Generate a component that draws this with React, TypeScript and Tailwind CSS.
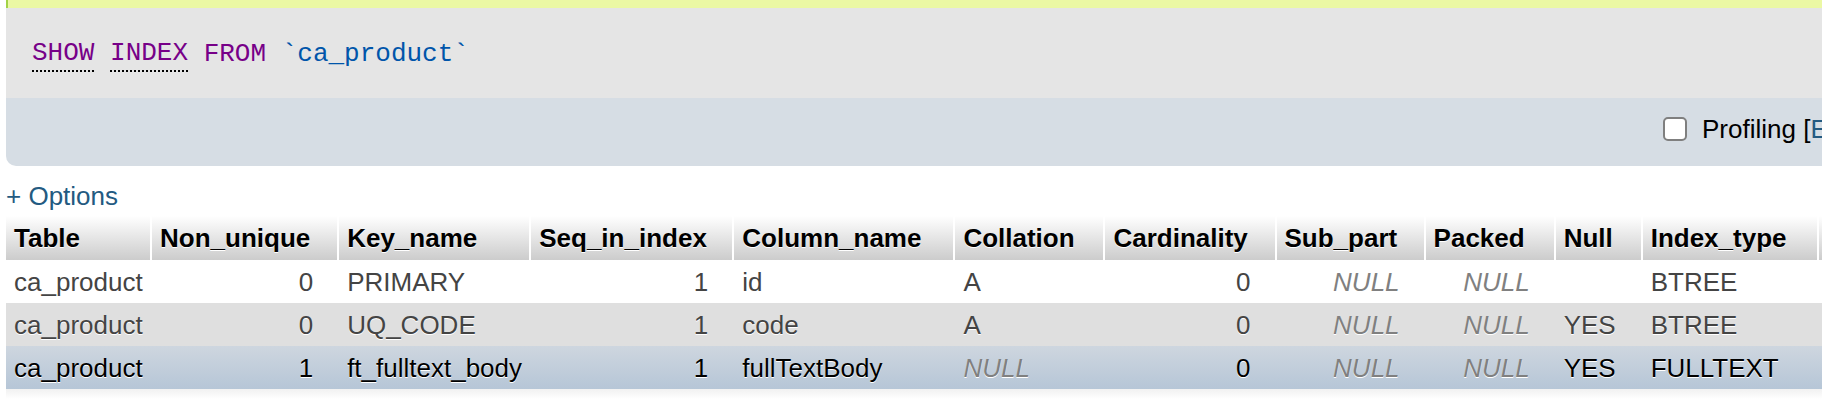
import React from "react";

type Cell = { v: string; align?: "r" | "l"; nul?: boolean };

const cols: { name: string; w: string }[] = [
  { name: "Table", w: "w-[146px]" },
  { name: "Non_unique", w: "w-[187px]" },
  { name: "Key_name", w: "w-[192px]" },
  { name: "Seq_in_index", w: "w-[203px]" },
  { name: "Column_name", w: "w-[221px]" },
  { name: "Collation", w: "w-[150px]" },
  { name: "Cardinality", w: "w-[171px]" },
  { name: "Sub_part", w: "w-[149px]" },
  { name: "Packed", w: "w-[130px]" },
  { name: "Null", w: "w-[87px]" },
  { name: "Index_type", w: "w-[176px]" },
  { name: "Comment", w: "w-[160px]" },
  { name: "Index_comment", w: "w-[220px]" },
];

const rows: Cell[][] = [
  [
    { v: "ca_product" },
    { v: "0", align: "r" },
    { v: "PRIMARY" },
    { v: "1", align: "r" },
    { v: "id" },
    { v: "A" },
    { v: "0", align: "r" },
    { v: "NULL", align: "r", nul: true },
    { v: "NULL", align: "r", nul: true },
    { v: "" },
    { v: "BTREE" },
    { v: "" },
    { v: "" },
  ],
  [
    { v: "ca_product" },
    { v: "0", align: "r" },
    { v: "UQ_CODE" },
    { v: "1", align: "r" },
    { v: "code" },
    { v: "A" },
    { v: "0", align: "r" },
    { v: "NULL", align: "r", nul: true },
    { v: "NULL", align: "r", nul: true },
    { v: "YES" },
    { v: "BTREE" },
    { v: "" },
    { v: "" },
  ],
  [
    { v: "ca_product" },
    { v: "1", align: "r" },
    { v: "ft_fulltext_body" },
    { v: "1", align: "r" },
    { v: "fullTextBody" },
    { v: "NULL", nul: true },
    { v: "0", align: "r" },
    { v: "NULL", align: "r", nul: true },
    { v: "NULL", align: "r", nul: true },
    { v: "YES" },
    { v: "FULLTEXT" },
    { v: "" },
    { v: "" },
  ],
];

const rowBg = [
  "bg-white text-[#444444]",
  "bg-[#dfdfdf] text-[#444444]",
  "bg-linear-to-b from-[#ced6df] to-[#b6c6d7] text-black",
];

export default function App() {
  return (
    <div className="w-[1822px] h-[400px] overflow-hidden bg-white font-['Liberation_Sans',Arial,sans-serif] text-[26px] leading-[30px]">
      <div className="ml-[6px] h-[8px] w-[2200px] bg-[#ebf8a4] border-l-2 border-[#a2d246]" />

      <div className="ml-[6px] w-[2200px] rounded-bl-[10px] overflow-hidden">
        <div className="h-[90px] bg-[#e5e5e5] pl-[26px] pt-[2px] flex items-center font-['Liberation_Mono','Courier_New',monospace] text-[26px] whitespace-pre">
          <span className="text-[#770088] border-b-2 border-dotted border-black leading-[34px]">SHOW</span>
          <span> </span>
          <span className="text-[#770088] border-b-2 border-dotted border-black leading-[34px]">INDEX</span>
          <span className="text-[#770088]"> FROM </span>
          <span className="text-[#0055aa]">`ca_product`</span>
        </div>
        <div className="h-[68px] bg-[#d6dde4] flex items-center pb-[6px]">
          <div className="ml-[1657px] flex items-center whitespace-nowrap">
            <span className="w-[24px] h-[24px] rounded-[5px] border-2 border-[#7f7f7f] bg-white" />
            <span className="ml-[15px] text-black">
              Profiling [<a className="text-[#235a81]">Edit inline</a>] [ <a className="text-[#235a81]">Edit</a> ] [ <a className="text-[#235a81]">Explain SQL</a> ]
            </span>
          </div>
        </div>
      </div>

      <div className="mt-[15px] ml-[6px] h-[30px] text-[#235a81]">+ Options</div>

      <table className="mt-[5px] ml-[6px] table-fixed border-separate border-spacing-0 w-[2193px]">
        <thead>
          <tr>
            {cols.map((c) => (
              <th
                key={c.name}
                className={`${c.w} h-[44px] px-[8px] text-left font-bold text-black whitespace-nowrap bg-linear-to-b from-white to-[#cccccc] border-r-2 border-white [text-shadow:0_1px_0_#fff]`}
              >
                {c.name}
              </th>
            ))}
          </tr>
        </thead>
        <tbody>
          {rows.map((r, i) => (
            <tr key={i} className={rowBg[i]}>
              {r.map((c, j) => (
                <td
                  key={j}
                  className={`h-[43px] whitespace-nowrap [text-shadow:0_1px_0_#fff] ${
                    c.align === "r" ? "text-right pr-[26px] pl-[8px]" : "text-left pl-[8px] pr-[8px]"
                  } ${c.nul ? "italic text-[#808080]" : ""}`}
                >
                  {c.v}
                </td>
              ))}
            </tr>
          ))}
        </tbody>
      </table>
      <div className="ml-[6px] h-[10px] w-[2193px] bg-linear-to-b from-[#f1f1f1] to-white" />
    </div>
  );
}
